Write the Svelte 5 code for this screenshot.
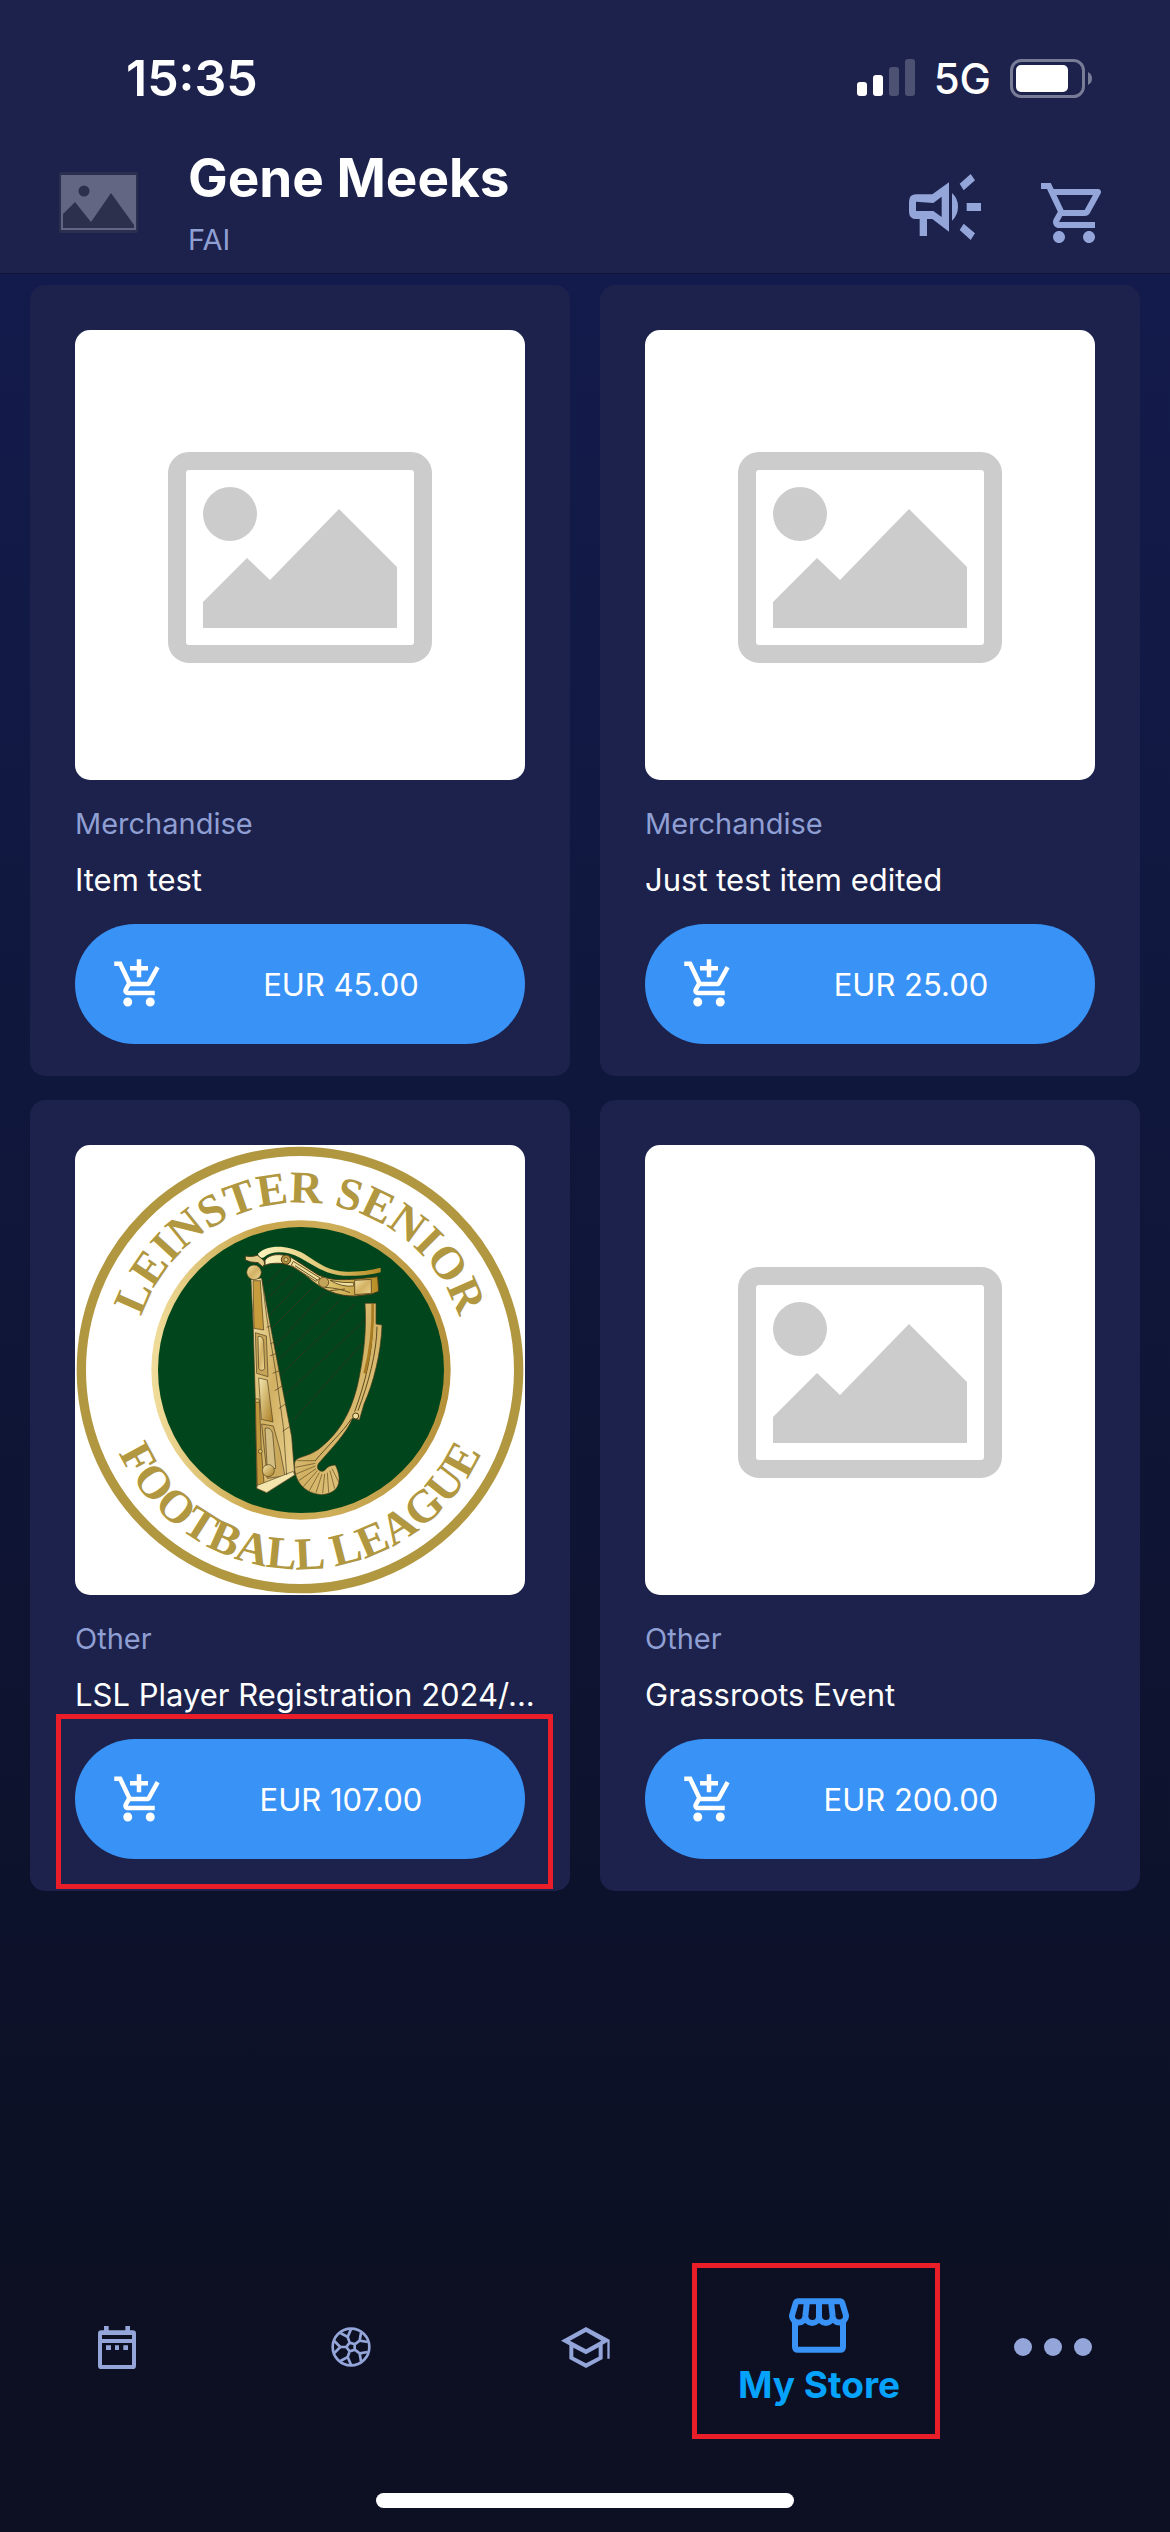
<script lang="ts">
  type Product = {
    category: string;
    title: string;
    price: string;
    crest?: boolean;
    highlighted?: boolean;
  };

  const profile = { name: "Gene Meeks", organisation: "FAI" };

  const products: Product[] = [
    { category: "Merchandise", title: "Item test", price: "EUR 45.00" },
    { category: "Merchandise", title: "Just test item edited", price: "EUR 25.00" },
    {
      category: "Other",
      title: "LSL Player Registration 2024/...",
      price: "EUR 107.00",
      crest: true,
      highlighted: true,
    },
    { category: "Other", title: "Grassroots Event", price: "EUR 200.00" },
  ];
</script>

{#snippet placeholder()}
  <svg class="picture" viewBox="0 0 450 450" role="img" aria-label="No picture">
    <rect x="102" y="131" width="246" height="193" rx="12" fill="none" stroke="#ccc" stroke-width="18" />
    <circle cx="155" cy="184" r="27" fill="#ccc" />
    <path d="M128 272 172 228 195 250 264 179 322 237V298H128Z" fill="#ccc" />
  </svg>
{/snippet}

{#snippet crest()}
  <svg class="picture" viewBox="45 45 1350 1350" role="img" aria-label="Leinster Senior Football League">
    <defs>
      <linearGradient id="ring" x1="0" y1="0" x2="1" y2="0">
        <stop offset="0" stop-color="#f0dc9a" />
        <stop offset="0.35" stop-color="#c9a64c" />
        <stop offset="0.6" stop-color="#cfae5a" />
        <stop offset="1" stop-color="#b5923a" />
      </linearGradient>
      <linearGradient id="gold" x1="0" y1="0" x2="1" y2="1">
        <stop offset="0" stop-color="#f3e3a8" />
        <stop offset="0.5" stop-color="#d2b163" />
        <stop offset="1" stop-color="#ecd593" />
      </linearGradient>
      <linearGradient id="neck" x1="0" y1="0" x2="1" y2="0">
        <stop offset="0" stop-color="#fbf3bd" />
        <stop offset="0.5" stop-color="#e3cb7c" />
        <stop offset="1" stop-color="#b88c24" />
      </linearGradient>
      <linearGradient id="panel" x1="0" y1="0" x2="1" y2="1">
        <stop offset="0" stop-color="#f5e8b0" />
        <stop offset="1" stop-color="#a87c22" />
      </linearGradient>
      <path id="arc-top" d="M218 720A502 502 0 0 1 1222 720" />
      <path id="arc-bottom" d="M122 720A598 598 0 0 0 1318 720" />
    </defs>
    <circle cx="720" cy="720" r="656" fill="none" stroke="#b1973f" stroke-width="28" />
    <circle cx="723" cy="720" r="439" fill="#00451b" stroke="url(#ring)" stroke-width="20" />
    <text class="crest-text">
      <textPath href="#arc-top" startOffset="50%">LEINSTER SENIOR</textPath>
    </text>
    <text class="crest-text">
      <textPath href="#arc-bottom" startOffset="50%">FOOTBALL LEAGUE</textPath>
    </text>

    <g transform="translate(510 270)" stroke-linejoin="round">
      <path
        d="M112 190 160 140M112 235 190 160M115 290 215 182M120 330 250 200M130 385 285 215M140 425 330 240M150 465 375 252M160 530 405 300M190 600 395 372"
        fill="none"
        stroke="#2b3524"
        stroke-width="3"
      />

      <g stroke="#4b3d1c" stroke-width="2">
        <path d="M63 178 95 174 116 290 160 520 185 650 194 765 110 818 80 805 76 540 70 330Z" fill="url(#gold)" />
        <path d="M69 182H91L101 330 72 325Z" fill="#c79c3c" />
        <path d="M76 338 109 348 114 470 80 460Z" fill="#c5a458" />
        <path d="M84 350Q98 345 101 365L104 445Q96 458 86 446Z" fill="url(#gold)" />
        <path d="M86 474 112 480 129 606 94 598Z" fill="url(#panel)" />
        <path d="M95 612 130 618 150 690 165 768 112 775Z" fill="#caa95d" />
        <path d="M105 625Q122 620 128 640L137 745 112 750Z" fill="#d3bd80" />
        <path d="M76 540H88L94 690 102 790 82 800Z" fill="#c1973b" />
        <path d="M82 796 190 754 194 765 110 818 80 805Z" fill="#f3e5ac" />
        <path d="M96 178 110 290 137 455 160 620 170 765" fill="none" />
        <circle cx="115" cy="752" r="18" fill="url(#panel)" />
        <circle cx="82" cy="542" r="6" fill="#d9b965" />
        <circle cx="91" cy="694" r="6" fill="#d9b965" />
        <path d="M110 322 124 317M120 372 134 365M120 408 143 398M128 460 149 452M134 512 157 498M146 566 166 552M158 634 178 620" fill="none" />
      </g>

      <path
        d="M105 120C120 102 150 98 185 113L265 165C300 182 340 180 380 177L443 170 446 214 425 222 378 228C320 230 280 207 250 185 220 160 185 132 150 130 130 129 115 131 105 136Z"
        fill="url(#neck)"
        stroke="#4b3d1c"
        stroke-width="3"
      />
      <path d="M190 124 270 174 258 184 184 136ZM300 181Q340 190 371 188V198Q335 202 300 181Z" fill="#f0dfa0" stroke="#6b5725" stroke-width="3" />
      <path d="M195 137 262 180M285 202Q330 205 360 218M300 212 345 207" fill="none" stroke="#6b5725" stroke-width="3" />
      <circle cx="168" cy="119" r="14" fill="#b8913f" stroke="#4b3d1c" stroke-width="3" />
      <circle cx="168" cy="119" r="6" fill="#e3cb7c" stroke="#4b3d1c" stroke-width="2" />
      <circle cx="281" cy="187" r="15" fill="#c4a458" stroke="#6b5725" stroke-width="3" />
      <path d="M374 181 424 178V220L374 224Z" fill="url(#gold)" stroke="#6b5725" stroke-width="3" />
      <path
        d="M84 101C110 74 170 72 222 101 270 133 300 154 350 155 390 156 420 151 452 143V157C420 165 390 169 340 167 290 165 250 135 210 113 170 93 125 91 102 112 94 116 85 112 84 101Z"
        fill="url(#neck)"
      />
      <path d="M46 108Q65 112 83 106L102 122Q108 134 98 140L84 128Q60 128 46 120Z" fill="#e3cd8b" stroke="#4b3d1c" stroke-width="3" />
      <circle cx="72" cy="157" r="22" fill="url(#gold)" stroke="#4b3d1c" stroke-width="2" />

      <path
        d="M405 250H438V312L456 315C453 400 430 490 402 552L388 600 368 594C350 640 300 690 266 730 258 742 264 754 276 754 292 752 284 738 316 735 338 780 330 820 275 824 220 820 190 780 194 728 200 705 240 715 280 676 340 625 372 555 388 470 402 400 410 330 405 250Z"
        fill="url(#gold)"
        stroke="#4b3d1c"
        stroke-width="2"
      />
      <path d="M427 314C428 400 405 490 374 575M441 320C440 400 415 490 384 572M365 596C335 640 290 680 256 722" fill="none" stroke="#5f4b1e" stroke-width="3" />
      <path d="M428 252C430 330 420 400 404 460" fill="none" stroke="#a87b20" stroke-width="8" />
      <path
        d="M258 722 202 722M256 730 196 742M256 738 198 762M258 746 206 782M262 752 220 800M268 758 238 812M276 762 258 818M284 762 278 820M292 758 296 818M300 752 314 806M306 746 326 786"
        fill="none"
        stroke="#5f4b1e"
        stroke-width="2"
      />
      <circle cx="377" cy="588" r="9" fill="#f0dc9a" stroke="#4b3d1c" stroke-width="3" />
    </g>
  </svg>
{/snippet}

<div class="app">
  <header>
    <div class="status">
      <time>15:35</time>
      <div class="status-right">
        <svg width="58" height="38" viewBox="0 0 58 38" fill="#fff" aria-label="Signal">
          <rect y="23" width="10" height="14" rx="3" />
          <rect x="16" y="16" width="10" height="21" rx="3" />
          <rect x="32" y="8" width="10" height="29" rx="3" opacity="0.22" />
          <rect x="48" width="10" height="37" rx="3" opacity="0.22" />
        </svg>
        <span>5G</span>
        <svg width="82" height="39" viewBox="0 0 82 39" aria-label="Battery">
          <rect x="1.5" y="1.5" width="72" height="36" rx="10" fill="none" stroke="#787c97" stroke-width="3" />
          <rect x="6" y="6" width="52" height="27" rx="5" fill="#fff" />
          <path d="M78 13Q82 15 82 19.500T78 26Z" fill="#787c97" />
        </svg>
      </div>
    </div>

    <div class="profile">
      <svg width="79" height="61" viewBox="0 0 79 61" role="img" aria-label="Profile picture">
        <rect width="79" height="61" rx="2" fill="#2b2f4f" />
        <rect x="2" y="3" width="75" height="55" fill="#626682" />
        <circle cx="25" cy="19" r="5.500" fill="#2d304d" />
        <path d="M4 42 16 30 32 50 52 21 75 53V56H4Z" fill="#2d304d" />
      </svg>
      <div class="who">
        <h1>{profile.name}</h1>
        <p>{profile.organisation}</p>
      </div>
      <div class="actions">
        <button type="button" aria-label="Announcements">
          <svg width="72" height="69" viewBox="327 522 216 207" fill="currentColor">
            <path fill-rule="evenodd" d="M349 583H397L447 547V695L397 657H381V708H359V657H349Q327 657 327 635V605Q327 583 349 583ZM348 605V633H400L425 651V590L400 609Z" />
            <path d="M456 579Q474 595 474 620T456 662ZM500 609H543V633H500ZM479 551 512 522 525 541 491 571ZM491 671 525 700 512 720 479 690Z" />
          </svg>
        </button>
        <button type="button" aria-label="Cart">
          <svg width="60" height="60" viewBox="1 2 20 20" fill="currentColor">
            <path d="M15.550 13c.75 0 1.410-.41 1.750-1.030l3.580-6.490A.996.996 0 0 0 20.010 4H5.210l-.94-2H1v2h2l3.600 7.590-1.350 2.440C4.520 15.370 5.480 17 7 17h12v-2H7l1.100-2h7.450zM6.160 6h12.150l-2.760 5H8.530L6.160 6zM7 18c-1.100 0-1.990.9-1.990 2S5.900 22 7 22s2-.9 2-2-.9-2-2-2zm10 0c-1.100 0-1.990.9-1.990 2s.89 2 1.990 2 2-.9 2-2-.9-2-2-2z" />
          </svg>
        </button>
      </div>
    </div>
  </header>

  <main>
    {#each products as product}
      <article class="card">
        {#if product.crest}
          {@render crest()}
        {:else}
          {@render placeholder()}
        {/if}
        <p class="category">{product.category}</p>
        <h2>{product.title}</h2>
        <div class="buy-wrap">
          <button type="button" class="buy">
            <svg width="54" height="54" viewBox="0 0 24 24" fill="currentColor" aria-hidden="true">
              <path d="M11 9h2V6h3V4h-3V1h-2v3H8v2h3v3zm-4 9c-1.100 0-1.990.9-1.990 2S5.900 22 7 22s2-.9 2-2-.9-2-2-2zm10 0c-1.100 0-1.990.9-1.990 2s.89 2 1.990 2 2-.9 2-2-.9-2-2-2zm-8.900-5h7.450c.75 0 1.410-.41 1.750-1.030l3.860-7.010L19.420 4l-3.870 7H8.530L4.270 2H1v2h2l3.600 7.590-1.350 2.440C4.520 15.370 5.480 17 7 17h12v-2H7l1.100-2z" />
            </svg>
            <span>{product.price}</span>
          </button>
          {#if product.highlighted}
            <span class="marker buy-marker" aria-hidden="true"></span>
          {/if}
        </div>
      </article>
    {/each}
  </main>

  <nav>
    <a href="#calendar" aria-label="Calendar">
      <svg width="38" height="43" viewBox="54 45 114 129" fill="currentColor">
        <path fill-rule="evenodd" d="M64 58H72V45H86V58H136V45H150V58H158Q168 58 168 68V164Q168 174 158 174H64Q54 174 54 164V68Q54 58 64 58ZM66 72V84H156V72ZM66 96V162H156V96Z" />
        <path d="M78 103H93V117H78ZM105 103H117V117H105ZM130 103H144V117H130Z" />
      </svg>
    </a>
    <a href="#matches" aria-label="Matches">
      <svg width="40" height="40" viewBox="0 0 120 120" fill="none" stroke="currentColor" stroke-width="8">
        <circle cx="60" cy="60" r="55" />
        <path d="M71 52V68L56 73 46 60 56 47ZM71 52 86 41M71 68 86 79M56 73 50 90M46 60H28M56 47 50 30" />
        <path d="M110 45 86 41 90 17M110 75 86 79 90 103M60 113 50 90 28 102M10 78 28 60 10 42M28 18 50 30 60 7" />
      </svg>
    </a>
    <a href="#courses" aria-label="Courses">
      <svg width="49" height="41" viewBox="61 112 147 123" fill="currentColor">
        <path fill-rule="evenodd" d="M136 112 207 150V207H200V157L186 165V208L136 235 86 208V167L61 153ZM136 127 88 153 136 179 182 153ZM98 174V201L136 221 174 201V173L136 194Z" />
      </svg>
    </a>
    <a href="#store" class="active" aria-current="page">
      <svg width="60" height="55" viewBox="354 204 180 164" fill="none" stroke="currentColor" stroke-width="18" aria-hidden="true">
        <path d="M363 256 374 219Q376 213 382 213H506Q512 213 514 219L525 256A20 20 0 0 1 485 258 20 20 0 0 1 444 258 20 20 0 0 1 403 258 20 20 0 0 1 363 256ZM408 213 403 258M444 213V258M480 213 485 258" />
        <path d="M372 276V350Q372 359 381 359H507Q516 359 516 350V276" />
      </svg>
      <span>My Store</span>
      <i class="marker nav-marker" aria-hidden="true"></i>
    </a>
    <a href="#more" aria-label="More">
      <svg width="78" height="18" viewBox="0 0 78 18" fill="currentColor">
        <circle cx="9" cy="9" r="9" />
        <circle cx="39" cy="9" r="9" />
        <circle cx="69" cy="9" r="9" />
      </svg>
    </a>
  </nav>
  <div class="home-indicator"></div>
</div>

<style>
  :global(body) {
    margin: 0;
    background: #0c1022;
  }

  .app {
    display: flex;
    flex-direction: column;
    min-height: 100vh;
    font-family: Inter, "Open Sans", sans-serif;
    color: #fff;
    background: linear-gradient(#131b4f 0%, #131b4c 11%, #10173c 43%, #0d122c 75%, #0c1022 90%);
  }

  svg {
    display: block;
    flex: none;
  }

  h1,
  h2,
  p {
    margin: 0;
  }

  button {
    border: 0;
    padding: 0;
    background: none;
    color: inherit;
    font: inherit;
    cursor: pointer;
  }

  header {
    background: #1c224c;
    border-bottom: 1px solid #0e1438;
  }

  .status {
    display: flex;
    align-items: center;
    justify-content: space-between;
    height: 108px;
    padding: 24px 78px 0 126px;
  }

  .status time {
    font-size: 50px;
    font-weight: 600;
  }

  .status-right {
    display: flex;
    align-items: center;
    gap: 19px;
    font-size: 42px;
    font-weight: 500;
  }

  .profile {
    display: flex;
    align-items: center;
    height: 141px;
    padding: 0 69px 0 59px;
  }

  .who {
    flex: 1;
    display: grid;
    gap: 10px;
    margin-left: 50px;
  }

  h1 {
    font-size: 53px;
    line-height: 64px;
    font-weight: 700;
  }

  .who p,
  .category {
    font-size: 29px;
    line-height: 40px;
    color: #8f9fd3;
  }

  .actions {
    display: flex;
    align-items: flex-end;
    gap: 60px;
    padding-top: 12px;
    color: #94a5d9;
  }

  main {
    display: grid;
    grid-template-columns: repeat(2, minmax(0, 1fr));
    gap: 24px 30px;
    padding: 11px 30px 24px;
  }

  .card {
    padding: 45px 45px 32px;
    border-radius: 15px;
    background: #1c224c;
  }

  .picture {
    width: 100%;
    aspect-ratio: 1;
    margin-bottom: 24px;
    border-radius: 15px;
    background: #fff;
  }

  .crest-text {
    font-family: "Liberation Serif", serif;
    font-size: 137px;
    font-weight: 700;
    text-anchor: middle;
    fill: #b1973f;
  }

  h2 {
    margin: 16px -30px 24px 0;
    font-size: 31px;
    line-height: 40px;
    font-weight: 400;
    white-space: nowrap;
    overflow: hidden;
    text-overflow: ellipsis;
  }

  .buy-wrap {
    position: relative;
  }

  .buy {
    display: flex;
    align-items: center;
    width: 100%;
    height: 120px;
    padding: 0 9px 0 37px;
    border-radius: 60px;
    background: #3992f5;
    color: #fff;
  }

  .buy span {
    flex: 1;
    font-size: 31px;
    text-align: center;
  }

  .marker {
    position: absolute;
    border: 5px solid #e91e28;
    pointer-events: none;
  }

  .buy-marker {
    inset: -25px -28px -30px -19px;
  }

  nav {
    display: grid;
    grid-template-columns: repeat(5, minmax(0, 1fr));
    margin-top: auto;
    color: #94a5d9;
  }

  nav a {
    position: relative;
    display: flex;
    flex-direction: column;
    align-items: center;
    justify-content: center;
    height: 168px;
    padding-bottom: 8px;
    color: inherit;
    text-decoration: none;
  }

  nav .active {
    gap: 12px;
    height: 176px;
    padding-bottom: 0;
    color: #3992f5;
  }

  .active span {
    font-size: 37px;
    line-height: 40px;
    font-weight: 700;
    color: #05a3fc;
  }

  .nav-marker {
    inset: 0 -4px 0 -10px;
  }

  .home-indicator {
    width: 418px;
    height: 15px;
    margin: 54px auto 24px;
    border-radius: 8px;
    background: #fff;
  }
</style>
